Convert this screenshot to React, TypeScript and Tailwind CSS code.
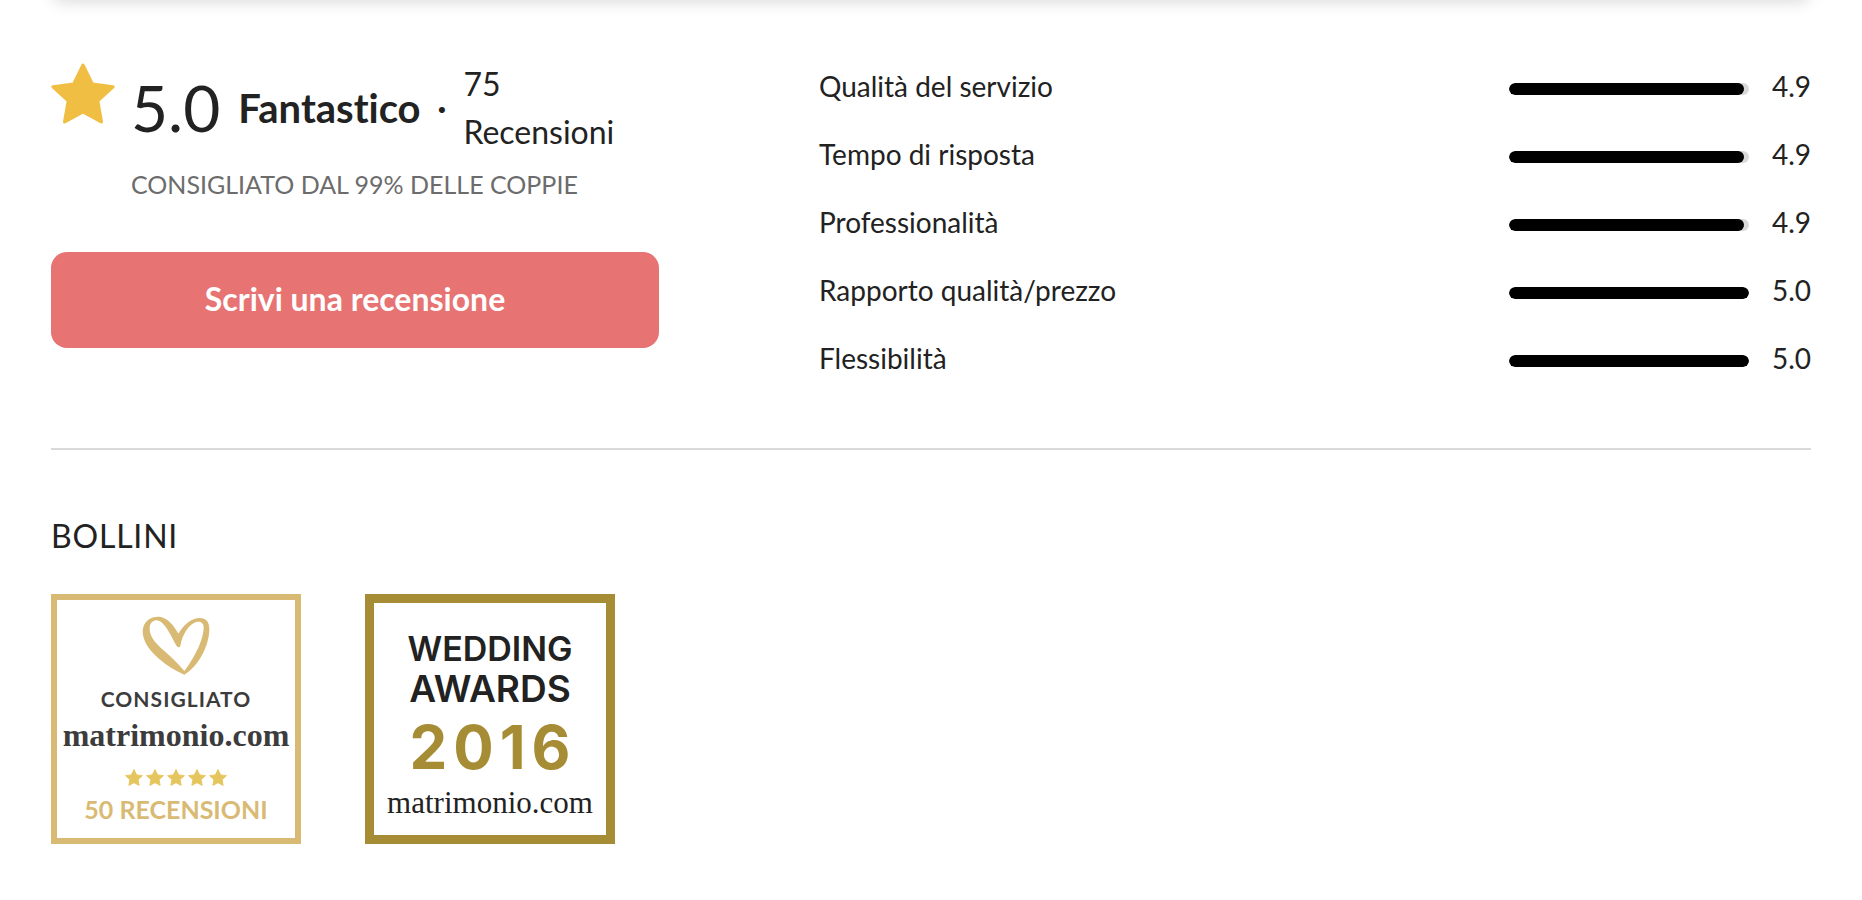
const ratings = [
  { label: 'Qualità del servizio', value: 4.9 },
  { label: 'Tempo di risposta', value: 4.9 },
  { label: 'Professionalità', value: 4.9 },
  { label: 'Rapporto qualità/prezzo', value: 5 },
  { label: 'Flessibilità', value: 5 },
];

function Star({ className }: { className: string }) {
  return (
    <svg viewBox="0 0 192 182" className={className} fill="currentColor" stroke="currentColor" strokeWidth="10" strokeLinejoin="round" aria-hidden="true">
      <path d="M96 6 L124 63 L186 71 L140 113 L151 176 L96 146 L41 176 L52 113 L6 71 L68 63 Z" />
    </svg>
  );
}

function Heart() {
  return (
    <svg viewBox="37 32 204 177" className="h-[59px] w-[68px] text-[#d9ba74]" fill="currentColor" fillRule="evenodd" aria-hidden="true">
      <path d="M164 208 C120 190 38 135 39 78 C40 50 60 33 88 34 C112 36 132 58 146 85 C165 55 185 39 210 38 C230 38 240 50 239 75 C237 125 205 185 164 208 Z M164 197 C185 170 222 110 222 65 C221 52 212 48 200 50 C180 55 158 85 152 122 C150 127 144 127 141 122 C125 95 105 45 80 45 C65 46 60 58 60 70 C60 115 120 140 164 197 Z" />
    </svg>
  );
}

export default function App() {
  return (
    <div className="flow-root overflow-hidden bg-white px-[51px] pb-14 font-['Lato','Liberation_Sans',sans-serif] text-[#222222] [font-variant-ligatures:none]">
      <div className="-mt-[26px] h-6 rounded-2xl bg-white shadow-[0_4px_16px_rgba(0,0,0,0.15)]" />

      <section className="mt-[62px] grid grid-cols-[608fr_992fr] gap-40 border-b-2 border-[#d9d9d9] pb-[68px]">
        <div>
          <div className="flex gap-4">
            <Star className="mt-[3px] h-[61px] w-16 shrink-0 text-[#f0be42]" />
            <div>
              <div className="flex items-center">
                <span className="text-[64px] leading-[96px]">5.0</span>
                <span className="ml-[18px] text-[40px] leading-[60px] font-bold">Fantastico</span>
                <span className="mx-[17px] text-[32px] leading-[48px] font-bold">·</span>
                <a href="#recensioni" className="w-40 text-[32px] leading-[48px]">75 Recensioni</a>
              </div>
              <p className="mt-2 text-[25px] leading-10 text-[#6c6c6c]">CONSIGLIATO DAL 99% DELLE COPPIE</p>
            </div>
          </div>
          <button type="button" className="mt-12 h-24 w-full rounded-2xl bg-[#e77373] pb-0.5 text-[32px] leading-[48px] font-bold text-white">
            Scrivi una recensione
          </button>
        </div>

        <ul className="flex flex-col gap-6 pt-1">
          {ratings.map((rating) => (
            <li key={rating.label} className="flex items-center text-[28px] leading-[44px]">
              <span className="flex-1">{rating.label}</span>
              <div className="mt-1.5 h-3 w-60 overflow-hidden rounded-full bg-[#d9d9d9]">
                <div className="h-full rounded-full bg-black" style={{ width: `${(rating.value / 5) * 100}%` }} />
              </div>
              <span className="w-[62px] text-right">{rating.value.toFixed(1)}</span>
            </li>
          ))}
        </ul>
      </section>

      <section className="pt-[62px]">
        <h2 className="text-[32px] leading-[48px] tracking-wide">BOLLINI</h2>
        <div className="mt-[34px] flex gap-16">
          <article className="flex size-[250px] flex-col items-center border-[6px] border-[#d9ba74] pt-4">
            <Heart />
            <p className="mt-[10px] text-[21px] leading-7 font-bold tracking-wider text-[#3c3c3c]">CONSIGLIATO</p>
            <p className="mt-0.5 font-['Liberation_Serif',serif] text-[32px] leading-10 font-bold text-[#3c3c3c]">matrimonio.com</p>
            <div className="mt-[14px] flex gap-[3px]">
              {[1, 2, 3, 4, 5].map((n) => (
                <Star key={n} className="h-[17px] w-[18px] text-[#e5c65e]" />
              ))}
            </div>
            <p className="mt-[7px] text-[25px] leading-8 font-bold text-[#d9ba74]">50 RECENSIONI</p>
          </article>
          <article className="flex size-[250px] flex-col items-center border-[9px] border-[#a68c34] pt-[26px]">
            <p className="font-['Inter',sans-serif] text-[34px] leading-10 font-semibold">WEDDING</p>
            <p className="font-['Inter',sans-serif] text-[37px] leading-10 font-semibold">AWARDS</p>
            <p className="pl-1.5 font-['Inter',sans-serif] text-[60px] leading-[76px] font-bold tracking-widest text-[#a68c34]">2016</p>
            <p className="font-['Liberation_Serif',serif] text-[31px] leading-9">matrimonio.com</p>
          </article>
        </div>
      </section>
    </div>
  );
}
